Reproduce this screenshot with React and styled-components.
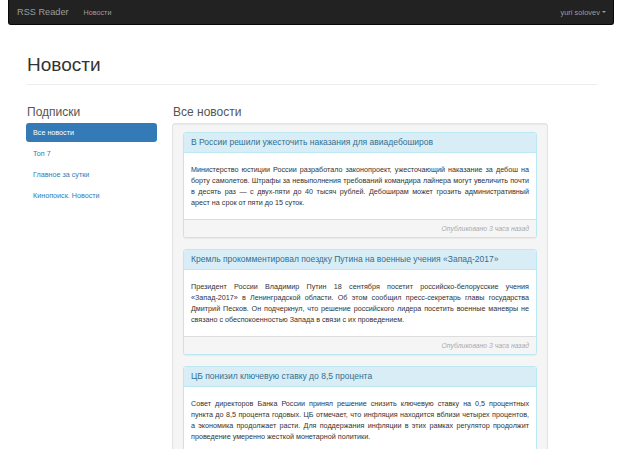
import React from "react";
import styled, { createGlobalStyle } from "styled-components";

const GlobalStyle = createGlobalStyle`
  html, body {
    margin: 0;
    padding: 0;
    background: #fff;
    overflow: hidden;
    font-family: "Liberation Sans", Arial, sans-serif;
    color: #333;
  }
`;

const subscriptions = [
  { title: "Все новости", active: true },
  { title: "Топ 7" },
  { title: "Главное за сутки" },
  { title: "Кинопоиск. Новости" },
];

const news = [
  {
    title: "В России решили ужесточить наказания для авиадебоширов",
    text: "Министерство юстиции России разработало законопроект, ужесточающий наказание за дебош на борту самолетов. Штрафы за невыполнения требований командира лайнера могут увеличить почти в десять раз — с двух-пяти до 40 тысяч рублей. Дебоширам может грозить административный арест на срок от пяти до 15 суток.",
  },
  {
    title: "Кремль прокомментировал поездку Путина на военные учения «Запад-2017»",
    text: "Президент России Владимир Путин 18 сентября посетит российско-белорусские учения «Запад-2017» в Ленинградской области. Об этом сообщил пресс-секретарь главы государства Дмитрий Песков. Он подчеркнул, что решение российского лидера посетить военные маневры не связано с обеспокоенностью Запада в связи с их проведением.",
  },
  {
    title: "ЦБ понизил ключевую ставку до 8,5 процента",
    text: "Совет директоров Банка России принял решение снизить ключевую ставку на 0,5 процентных пункта до 8,5 процента годовых. ЦБ отмечает, что инфляция находится вблизи четырех процентов, а экономика продолжает расти. Для поддержания инфляции в этих рамках регулятор продолжит проведение умеренно жесткой монетарной политики.",
  },
];

export default function App() {
  return (
    <>
      <GlobalStyle />
      <Navbar>
        <Brand>RSS Reader</Brand>
        <NavLink>Новости</NavLink>
        <UserMenu>
          yuri solovev
          <Caret />
        </UserMenu>
      </Navbar>
      <Container>
        <PageHeader>Новости</PageHeader>
        <Row>
          <Sidebar>
            <SectionTitle>Подписки</SectionTitle>
            <Pills>
              {subscriptions.map((s) => (
                <Pill key={s.title} active={s.active}>
                  {s.title}
                </Pill>
              ))}
            </Pills>
          </Sidebar>
          <Main>
            <SectionTitle>Все новости</SectionTitle>
            <Well>
              {news.map((n) => (
                <Panel key={n.title}>
                  <PanelHeading>{n.title}</PanelHeading>
                  <PanelBody>{n.text}</PanelBody>
                  <PanelFooter>Опубликовано 3 часа назад</PanelFooter>
                </Panel>
              ))}
            </Well>
          </Main>
        </Row>
      </Container>
    </>
  );
}

const Navbar = styled.div`
  margin: 0 8px;
  height: 25px;
  background: #222;
  border: 1px solid #080808;
  border-top: none;
  border-radius: 0 0 3px 3px;
  display: flex;
  align-items: center;
  padding: 0 7px 0 8px;
  box-sizing: border-box;
`;

const Brand = styled.div`
  color: #9d9d9d;
  font-size: 9.2px;
  margin-right: 15px;
`;

const NavLink = styled.div`
  color: #9d9d9d;
  font-size: 7.2px;
`;

const UserMenu = styled.div`
  margin-left: auto;
  color: #9d9d9d;
  font-size: 7.5px;
  display: flex;
  align-items: center;
`;

const Caret = styled.span`
  width: 0;
  height: 0;
  margin-left: 2px;
  border-left: 2px solid transparent;
  border-right: 2px solid transparent;
  border-top: 2px solid #9d9d9d;
`;

const Container = styled.div`
  padding: 0 25px 0 26px;
`;

const PageHeader = styled.h1`
  margin: 30px 0 0;
  padding: 0 0 8px 1px;
  font-size: 19px;
  font-weight: 400;
  line-height: 1.1;
  color: #333;
  border-bottom: 1px solid #eee;
`;

const Row = styled.div`
  display: flex;
  gap: 15px;
  margin-top: 20px;
`;

const Sidebar = styled.div`
  width: 131px;
`;

const Main = styled.div`
  width: 376px;
`;

const SectionTitle = styled.h3`
  margin: 0 0 4px 1px;
  font-size: 12px;
  font-weight: 400;
  line-height: 14px;
  color: #555;
`;

const Pills = styled.div`
  display: flex;
  flex-direction: column;
  gap: 2px;
`;

const Pill = styled.div`
  height: 19px;
  display: flex;
  align-items: center;
  padding: 0 7px;
  border-radius: 3px;
  font-size: 7.2px;
  color: ${(p) => (p.active ? "#fff" : "#337ab7")};
  background: ${(p) => (p.active ? "#337ab7" : "transparent")};
`;

const Well = styled.div`
  background: #f5f5f5;
  border: 1px solid #e3e3e3;
  border-radius: 3px;
  box-shadow: inset 0 1px 1px rgba(0, 0, 0, 0.05);
  padding: 8px 10px;
`;

const Panel = styled.div`
  background: #fff;
  border: 1px solid #bce8f1;
  border-radius: 3px;
  box-shadow: 0 1px 1px rgba(0, 0, 0, 0.05);
  margin-bottom: 11px;
  overflow: hidden;
`;

const PanelHeading = styled.div`
  height: 19px;
  display: flex;
  align-items: center;
  padding: 0 7px;
  background: #d9edf7;
  border-bottom: 1px solid #bce8f1;
  color: #31708f;
  font-size: 8.5px;
`;

const PanelBody = styled.div`
  padding: 11px 7px 11px;
  font-size: 7.2px;
  line-height: 11px;
  text-align: justify;
  color: #333;
`;

const PanelFooter = styled.div`
  padding: 4px 7px;
  background: #f5f5f5;
  border-top: 1px solid #ddd;
  text-align: right;
  font-style: italic;
  font-size: 6.8px;
  line-height: 9px;
  color: #aaa;
`;
